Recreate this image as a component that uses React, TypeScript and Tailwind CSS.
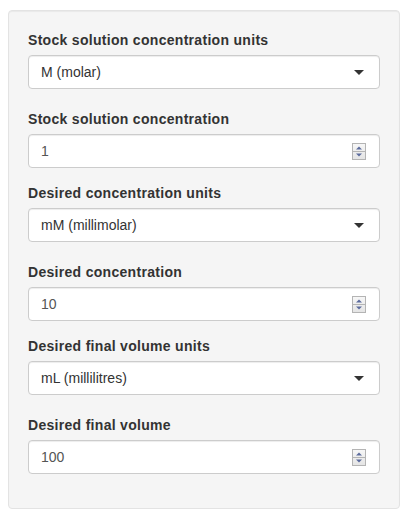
const font = "font-['Liberation_Sans','Helvetica_Neue',Arial,sans-serif]";

function Spinner() {
    return (
        <svg width="14" height="17" viewBox="0 0 14 17" className="shrink-0">
            <defs>
                <linearGradient id="spinBg" x1="0" y1="0" x2="0" y2="1">
                    <stop offset="0" stopColor="#f7f7f7" />
                    <stop offset="1" stopColor="#e4e4e4" />
                </linearGradient>
            </defs>
            <rect x="0.5" y="0.5" width="13" height="16" fill="url(#spinBg)" stroke="#b4b4b4" />
            <line x1="0.5" y1="8.5" x2="13.5" y2="8.5" stroke="#b4b4b4" />
            <path d="M4 6.5 L7 3.5 L10 6.5 Z" fill="#5b6a9c" />
            <path d="M4 10.5 L7 13.5 L10 10.5 Z" fill="#5b6a9c" />
        </svg>
    );
}

function SelectField({ label, value }: { label: string; value: string }) {
    return (
        <div className="mb-5">
            <label className="block text-[14px] leading-5 font-bold text-[#333] tracking-[0.3px] mb-[5px]">{label}</label>
            <div className="h-[34px] flex items-center justify-between bg-white border border-[#cccccc] rounded-[4px] pl-3 pr-[15px] shadow-[inset_0_1px_1px_rgba(0,0,0,0.075)]">
                <span className="text-[14px] text-[#333]">{value}</span>
                <span className="w-0 h-0 border-x-[5px] border-x-transparent border-t-[5px] border-t-[#333]" />
            </div>
        </div>
    );
}

function NumberField({ label, value }: { label: string; value: string }) {
    return (
        <div className="mb-[15px]">
            <label className="block text-[14px] leading-5 font-bold text-[#333] tracking-[0.3px] mb-[5px]">{label}</label>
            <div className="h-[34px] flex items-center justify-between bg-white border border-[#cccccc] rounded-[4px] pl-3 pr-[13px] shadow-[inset_0_1px_1px_rgba(0,0,0,0.075)]">
                <span className="text-[14px] text-[#555]">{value}</span>
                <Spinner />
            </div>
        </div>
    );
}

export default function App() {
    return (
        <div className={`w-[408px] h-[519px] bg-white pt-[10px] px-2 ${font}`}>
            <div className="bg-[#f5f5f5] border border-[#e3e3e3] rounded-[4px] px-[19px] pt-[19px] pb-[19px] shadow-[inset_0_1px_1px_rgba(0,0,0,0.05)]">
                <SelectField label="Stock solution concentration units" value="M (molar)" />
                <NumberField label="Stock solution concentration" value="1" />
                <SelectField label="Desired concentration units" value="mM (millimolar)" />
                <NumberField label="Desired concentration" value="10" />
                <SelectField label="Desired final volume units" value="mL (millilitres)" />
                <NumberField label="Desired final volume" value="100" />
            </div>
        </div>
    );
}
